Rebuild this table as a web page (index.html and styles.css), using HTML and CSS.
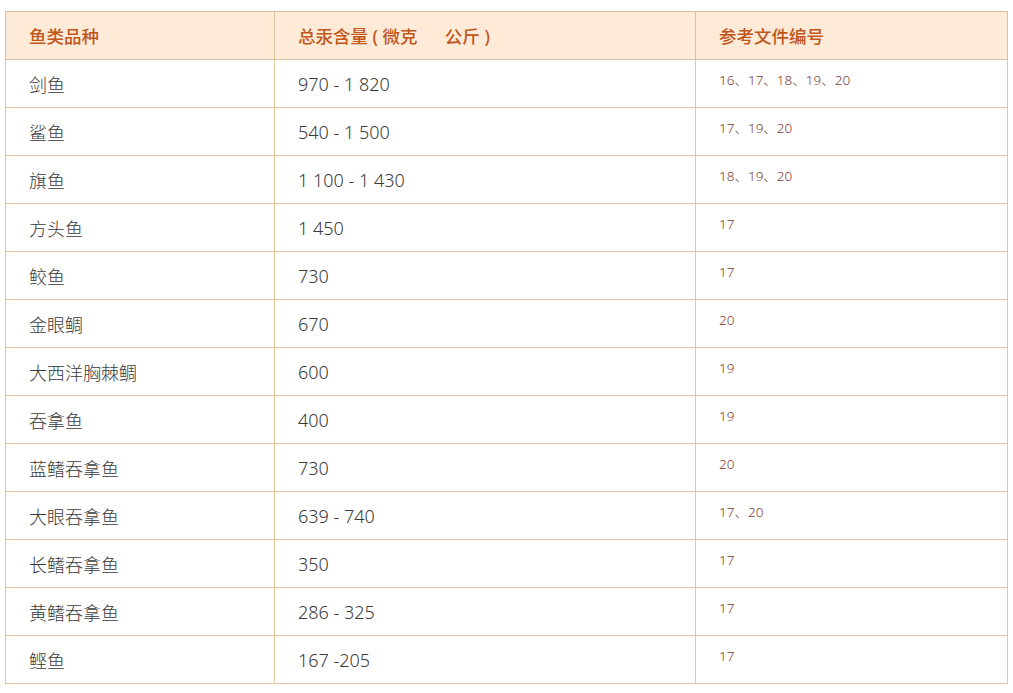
FILE: index.html
```html
<!DOCTYPE html>
<html lang="zh">
<head>
<meta charset="utf-8">
<link rel="stylesheet" href="styles.css">
</head>
<body>
<table class="fish">
  <colgroup><col class="c1"><col class="c2"><col class="c3"></colgroup>
  <thead>
    <tr><th>鱼类品种</th><th>总汞含量 ( 微克 &nbsp; &nbsp; &nbsp;公斤 )</th><th>参考文件编号</th></tr>
  </thead>
  <tbody>
    <tr><td>剑鱼</td><td>970 - 1 820</td><td><span class="ref">16、17、18、19、20</span></td></tr>
    <tr><td>鲨鱼</td><td>540 - 1 500</td><td><span class="ref">17、19、20</span></td></tr>
    <tr><td>旗鱼</td><td>1 100 - 1 430</td><td><span class="ref">18、19、20</span></td></tr>
    <tr><td>方头鱼</td><td>1 450</td><td><span class="ref">17</span></td></tr>
    <tr><td>鲛鱼</td><td>730</td><td><span class="ref">17</span></td></tr>
    <tr><td>金眼鲷</td><td>670</td><td><span class="ref">20</span></td></tr>
    <tr><td>大西洋胸棘鲷</td><td>600</td><td><span class="ref">19</span></td></tr>
    <tr><td>吞拿鱼</td><td>400</td><td><span class="ref">19</span></td></tr>
    <tr><td>蓝鳍吞拿鱼</td><td>730</td><td><span class="ref">20</span></td></tr>
    <tr><td>大眼吞拿鱼</td><td>639 - 740</td><td><span class="ref">17、20</span></td></tr>
    <tr><td>长鳍吞拿鱼</td><td>350</td><td><span class="ref">17</span></td></tr>
    <tr><td>黄鳍吞拿鱼</td><td>286 - 325</td><td><span class="ref">17</span></td></tr>
    <tr><td>鲣鱼</td><td>167 -205</td><td><span class="ref">17</span></td></tr>
  </tbody>
</table>
</body>
</html>
```

FILE: styles.css
```css
html, body {
  margin: 0;
  padding: 0;
  background: #ffffff;
}
body {
  padding: 11px 6px 0 5px;
  font-family: "Noto Sans", "Noto Sans CJK SC", sans-serif;
}
.fish {
  width: 1002px;
  border-collapse: collapse;
  table-layout: fixed;
}
.c1 { width: 269px; }
.c2 { width: 421px; }
.c3 { width: 312px; }
.fish th, .fish td {
  border: 1px solid #e2c79c;
  height: 48px;
  padding: 0 0 0 23px;
  text-align: left;
  vertical-align: middle;
  box-sizing: border-box;
}
.fish th {
  background: #fdebd8;
  color: #c1561b;
  font-size: 17.5px;
  font-weight: 500;
  border-color: #dcbf9c;
}
.fish td {
  color: #3a3a3a;
  font-size: 18px;
  font-weight: 300;
}
.ref {
  font-size: 13.5px;
  color: #7d3a34;
  position: relative;
  top: -6px;
}
```
